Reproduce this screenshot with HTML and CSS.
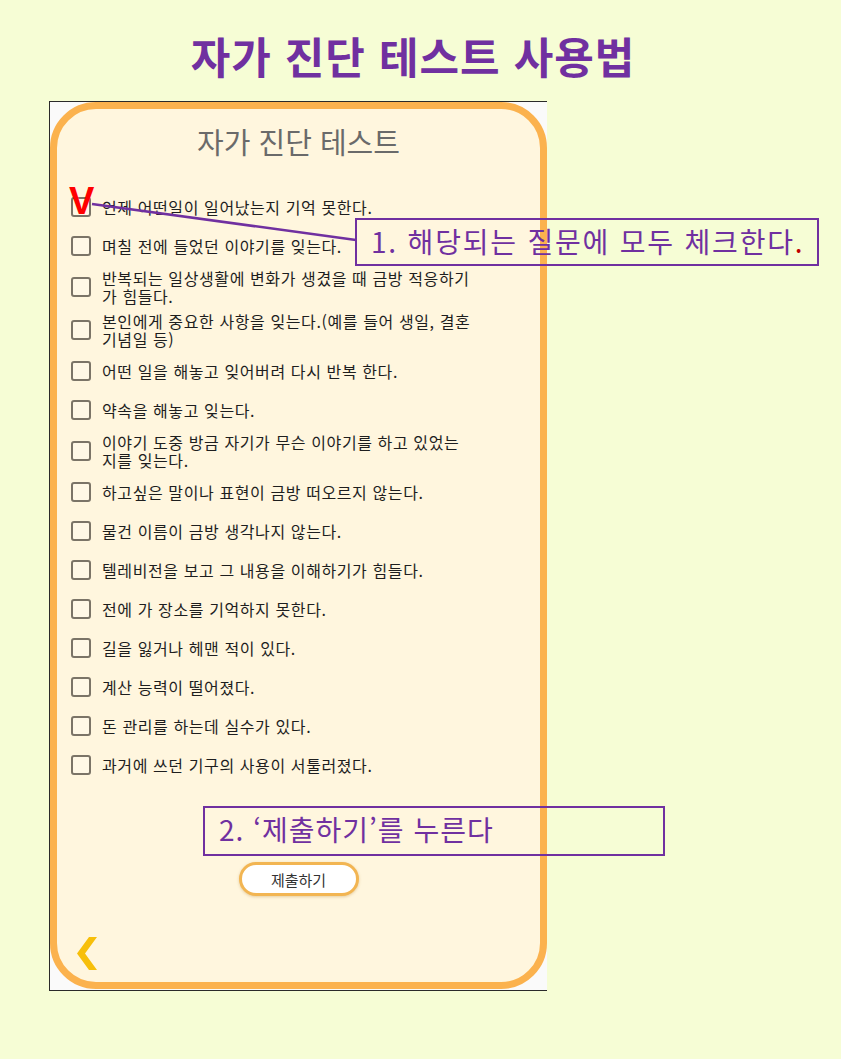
FILE: index.html
```html
<!DOCTYPE html>
<html lang="ko">
<head>
<meta charset="utf-8">
<link rel="stylesheet" href="styles.css">
</head>
<body>
<div class="slide">
  <h1 class="heading">자가 진단 테스트 사용법</h1>
  <div class="phone">
    <div class="card">
      <h2 class="card-title">자가 진단 테스트</h2>
      <ul class="checklist">
        <li class="item"><span class="box"></span><span class="label">언제 어떤일이 일어났는지 기억 못한다.</span></li>
        <li class="item"><span class="box"></span><span class="label">며칠 전에 들었던 이야기를 잊는다.</span></li>
        <li class="item"><span class="box"></span><span class="label">반복되는 일상생활에 변화가 생겼을 때 금방 적응하기가 힘들다.</span></li>
        <li class="item"><span class="box"></span><span class="label">본인에게 중요한 사항을 잊는다.(예를 들어 생일, 결혼기념일 등)</span></li>
        <li class="item"><span class="box"></span><span class="label">어떤 일을 해놓고 잊어버려 다시 반복 한다.</span></li>
        <li class="item"><span class="box"></span><span class="label">약속을 해놓고 잊는다.</span></li>
        <li class="item"><span class="box"></span><span class="label">이야기 도중 방금 자기가 무슨 이야기를 하고 있었는지를 잊는다.</span></li>
        <li class="item"><span class="box"></span><span class="label">하고싶은 말이나 표현이 금방 떠오르지 않는다.</span></li>
        <li class="item"><span class="box"></span><span class="label">물건 이름이 금방 생각나지 않는다.</span></li>
        <li class="item"><span class="box"></span><span class="label">텔레비전을 보고 그 내용을 이해하기가 힘들다.</span></li>
        <li class="item"><span class="box"></span><span class="label">전에 가 장소를 기억하지 못한다.</span></li>
        <li class="item"><span class="box"></span><span class="label">길을 잃거나 헤맨 적이 있다.</span></li>
        <li class="item"><span class="box"></span><span class="label">계산 능력이 떨어졌다.</span></li>
        <li class="item"><span class="box"></span><span class="label">돈 관리를 하는데 실수가 있다.</span></li>
        <li class="item"><span class="box"></span><span class="label">과거에 쓰던 기구의 사용이 서툴러졌다.</span></li>
      </ul>
      <button class="submit" type="button">제출하기</button>
      <svg class="back" width="22" height="34" viewBox="0 0 22 34"><polygon points="13,0 21,0 9,16.5 21,33 13,33 1,16.5" fill="#f7bf0a"/></svg>
    </div>
  </div>

  <svg class="connector" width="841" height="1059" viewBox="0 0 841 1059"><line x1="92" y1="204" x2="356" y2="240" stroke="#7030a0" stroke-width="2.5"/></svg>
  <span class="mark">V</span>
  <div class="callout callout-one">1. 해당되는 질문에 모두 체크한다<span class="dot">.</span></div>
  <div class="callout callout-two">2. ‘제출하기’를 누른다</div>
</div>
</body>
</html>
```

FILE: styles.css
```css
html, body {
  margin: 0;
  padding: 0;
  background: #f6fdd5;
}

.slide {
  position: relative;
  width: 841px;
  height: 1059px;
  overflow: hidden;
  font-family: "Noto Sans CJK KR", "Noto Sans", sans-serif;
}

.heading {
  margin: 0;
  padding: 31px 15px 0 0;
  height: 48px;
  line-height: 48px;
  text-align: center;
  font-size: 43px;
  font-weight: 700;
  color: #7030a0;
  letter-spacing: 1px;
}

.phone {
  margin: 22px 0 0 49px;
  width: 498px;
  height: 890px;
  box-sizing: border-box;
  border-top: 1px solid #2a2a2a;
  border-left: 1px solid #2a2a2a;
  border-bottom: 1px solid #2a2a2a;
  background: #fafafa;
}

.card {
  height: 887px;
  box-sizing: border-box;
  border: 7px solid #fbb24e;
  border-radius: 46px;
  background: #fff6de;
  display: flex;
  flex-direction: column;
  padding: 16px 0 0 14px;
}

.card-title {
  margin: 0;
  padding-right: 14px;
  height: 32px;
  line-height: 32px;
  text-align: center;
  font-size: 29px;
  font-weight: 400;
  color: #6a6a6a;
}

.checklist {
  list-style: none;
  margin: 34px 0 0 0;
  padding: 0;
  width: 410px;
}

.item {
  display: flex;
  align-items: center;
  gap: 11px;
  min-height: 32px;
  margin-bottom: 7px;
}

.box {
  flex: none;
  width: 20px;
  height: 20px;
  box-sizing: border-box;
  border: 2px solid #7b7467;
  border-radius: 3px;
  background: #fff8e6;
}

.label {
  width: 372px;
  font-size: 16px;
  line-height: 18px;
  letter-spacing: 0.6px;
  color: #1e1e1e;
}

.submit {
  align-self: center;
  margin: 74px 14px 0 0;
  width: 120px;
  height: 34px;
  border: 3px solid #f2b552;
  border-radius: 17px;
  background: #ffffff;
  box-shadow: 0 1px 3px rgba(180, 130, 40, 0.35);
  font-family: "Noto Sans CJK KR", sans-serif;
  font-size: 15px;
  color: #333333;
  padding: 0;
}

.back {
  margin: 41px 0 0 5px;
  display: block;
}

.connector {
  position: absolute;
  left: 0;
  top: 0;
  pointer-events: none;
}

.mark {
  position: absolute;
  left: 69px;
  top: 181px;
  font-family: "Liberation Sans", sans-serif;
  font-weight: 700;
  font-size: 38px;
  line-height: 40px;
  color: #ff0000;
}

.callout {
  position: absolute;
  box-sizing: border-box;
  border: 2px solid #7030a0;
  color: #7030a0;
  font-size: 28px;
  letter-spacing: 1px;
  line-height: 43px;
  padding-left: 14px;
  white-space: nowrap;
}

.callout-one {
  left: 355px;
  top: 218px;
  width: 464px;
  height: 48px;
  letter-spacing: 1.8px;
}

.callout-two {
  left: 203px;
  top: 806px;
  width: 462px;
  height: 50px;
}

.dot {
  color: #c00000;
}
```
